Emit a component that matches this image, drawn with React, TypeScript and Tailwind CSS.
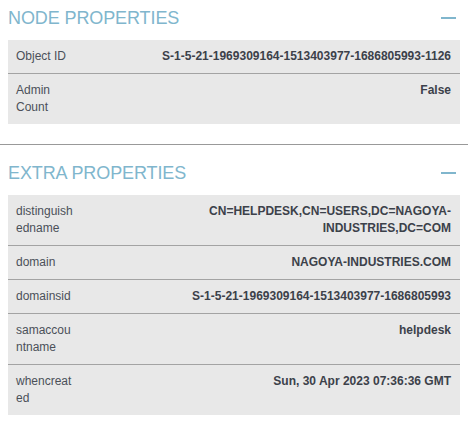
type Row = { label: string; value: string };

const nodeProps: Row[] = [
  { label: "Object ID", value: "S-1-5-21-1969309164-1513403977-1686805993-1126" },
  { label: "Admin Count", value: "False" },
];

const extraProps: Row[] = [
  { label: "distinguishedname", value: "CN=HELPDESK,CN=USERS,DC=NAGOYA-INDUSTRIES,DC=COM" },
  { label: "domain", value: "NAGOYA-INDUSTRIES.COM" },
  { label: "domainsid", value: "S-1-5-21-1969309164-1513403977-1686805993" },
  { label: "samaccountname", value: "helpdesk" },
  { label: "whencreated", value: "Sun, 30 Apr 2023 07:36:36 GMT" },
];

const Section = ({ title, rows }: { title: string; rows: Row[] }) => {
  return (
    <div className="px-2">
      <div className="flex h-[36px] items-center justify-between">
        <h2 className="text-[18px] font-normal leading-[22px] tracking-[-0.1px] text-[#80b6cd]">{title}</h2>
        {/* collapse */}
        <div className="mr-1 h-[2px] w-[15px] bg-[#80b6cd]" />
      </div>
      <div className="mt-1 bg-[#e8e8e8]">
        {rows.map((r, i) => (
          <div
            key={r.label}
            className={`flex ${i > 0 ? "border-t border-[#a3a3a3]" : ""}`}
          >
            <div className="w-[74px] shrink-0 py-2 pl-2 pr-2 text-[12px] leading-[17px] text-[#4b5059] [overflow-wrap:anywhere]">
              {r.label}
            </div>
            <div className="flex-1 py-2 pl-2 pr-[9px] text-right text-[12px] font-bold leading-[17px] text-[#3c414a]">
              {r.value}
            </div>
          </div>
        ))}
      </div>
    </div>
  );
};

const App = () => {
  return (
    <div className="min-h-[425px] w-[468px] bg-white font-['Liberation_Sans',Arial,sans-serif]">
      <Section title="NODE PROPERTIES" rows={nodeProps} />
      <div className="mt-5 border-t border-[#999999]" />
      <div className="pt-[10px]">
        <Section title="EXTRA PROPERTIES" rows={extraProps} />
      </div>
    </div>
  );
};

export default App;
